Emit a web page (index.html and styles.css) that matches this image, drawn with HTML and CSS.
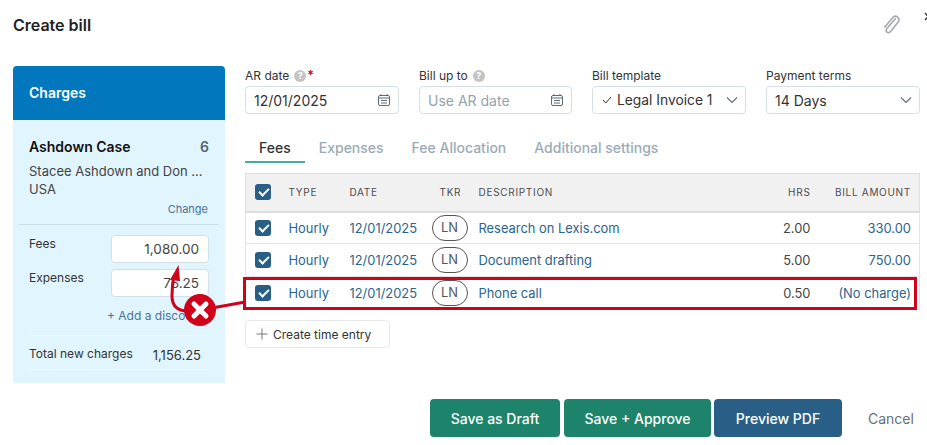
FILE: index.html
```html
<!DOCTYPE html>
<html lang="en">
<head>
    <meta charset="UTF-8">
    <title>Create bill</title>
    <link rel="stylesheet" href="styles.css">
</head>
<body>
    <div class="modal">
        <div class="modal-header">
            <h1>Create bill</h1>
            <svg class="clip-icon" width="18" height="20" viewBox="0 0 18 20" fill="none" stroke="#a3a9ae" stroke-width="1.600" stroke-linecap="round">
                <path d="M13.500 4.500 5 14.500c-1.300 1.600-1.100 2.900 0 3.700 1.100.8 2.600.5 3.800-.9l7-8.800c1.600-2.100 1.300-4.300-.2-5.500-1.600-1.200-3.700-.8-5.200 1L2.800 13"/>
            </svg>
            <svg class="close-icon" width="8" height="10" viewBox="0 0 8 10" fill="none" stroke="#333" stroke-width="1.300">
                <path d="M1 1l6 7M7 1 1 8"/>
            </svg>
        </div>

        <div class="modal-body">
            <aside class="charges">
                <div class="charges-title">Charges</div>
                <div class="case-info">
                    <div class="case-row">
                        <strong>Ashdown Case</strong>
                        <span class="case-count">6</span>
                    </div>
                    <div class="case-client">Stacee Ashdown and Don ...</div>
                    <div class="case-client case-country">USA</div>
                    <a class="change-link">Change</a>
                </div>
                <div class="charges-form">
                    <div class="charge-row">
                        <label>Fees</label>
                        <div class="charge-input">1,080.00</div>
                    </div>
                    <div class="charge-row">
                        <label>Expenses</label>
                        <div class="charge-input">76.25</div>
                    </div>
                    <a class="discount-link">+ Add a discount</a>
                </div>
                <div class="charges-total">
                    <span>Total new charges</span>
                    <span class="total-value">1,156.25</span>
                </div>
            </aside>

            <main class="bill-main">
                <div class="field-row">
                    <div class="field">
                        <div class="field-label">AR date <span class="help">?</span><span class="required">*</span></div>
                        <div class="field-box">
                            <span>12/01/2025</span>
                            <svg width="14" height="14" viewBox="0 0 14 14" fill="none" stroke="#5f6b75" stroke-width="1"><rect x="1.500" y="2.500" width="11" height="10" rx="1.500"/><path d="M1.500 5h11M4 1v2M10 1v2M4 7.500h6M4 10h6"/></svg>
                        </div>
                    </div>
                    <div class="field field-short">
                        <div class="field-label">Bill up to <span class="help">?</span></div>
                        <div class="field-box placeholder">
                            <span>Use AR date</span>
                            <svg width="14" height="14" viewBox="0 0 14 14" fill="none" stroke="#5f6b75" stroke-width="1"><rect x="1.500" y="2.500" width="11" height="10" rx="1.500"/><path d="M1.500 5h11M4 1v2M10 1v2M4 7.500h6M4 10h6"/></svg>
                        </div>
                    </div>
                    <div class="field">
                        <div class="field-label">Bill template</div>
                        <div class="field-box">
                            <span class="template-value">
                                <svg width="10" height="8" viewBox="0 0 10 8" fill="none" stroke="#333" stroke-width="1"><path d="M1 4l2.800 3L9 1"/></svg>
                                Legal Invoice 1
                            </span>
                            <svg width="12" height="8" viewBox="0 0 12 8" fill="none" stroke="#5f6b75" stroke-width="1.100"><path d="M1 1.500l5 5 5-5"/></svg>
                        </div>
                    </div>
                    <div class="field">
                        <div class="field-label">Payment terms</div>
                        <div class="field-box">
                            <span>14 Days</span>
                            <svg width="12" height="8" viewBox="0 0 12 8" fill="none" stroke="#5f6b75" stroke-width="1.100"><path d="M1 1.500l5 5 5-5"/></svg>
                        </div>
                    </div>
                </div>

                <div class="tabs">
                    <div class="tab active">Fees</div>
                    <div class="tab">Expenses</div>
                    <div class="tab">Fee Allocation</div>
                    <div class="tab">Additional settings</div>
                </div>

                <table class="fees-table">
                    <colgroup>
                        <col class="col-check">
                        <col class="col-type">
                        <col class="col-date">
                        <col class="col-tkr">
                        <col>
                        <col class="col-hrs">
                        <col class="col-amount">
                    </colgroup>
                    <thead>
                        <tr>
                            <th><span class="checkbox"></span></th>
                            <th>TYPE</th>
                            <th>DATE</th>
                            <th class="tkr-head">TKR</th>
                            <th>DESCRIPTION</th>
                            <th class="num">HRS</th>
                            <th class="num">BILL AMOUNT</th>
                        </tr>
                    </thead>
                    <tbody>
                        <tr>
                            <td><span class="checkbox"></span></td>
                            <td class="link">Hourly</td>
                            <td class="link">12/01/2025</td>
                            <td><span class="tkr">LN</span></td>
                            <td class="link">Research on Lexis.com</td>
                            <td class="num">2.00</td>
                            <td class="num link">330.00</td>
                        </tr>
                        <tr>
                            <td><span class="checkbox"></span></td>
                            <td class="link">Hourly</td>
                            <td class="link">12/01/2025</td>
                            <td><span class="tkr">LN</span></td>
                            <td class="link">Document drafting</td>
                            <td class="num">5.00</td>
                            <td class="num link">750.00</td>
                        </tr>
                        <tr>
                            <td><span class="checkbox"></span></td>
                            <td class="link">Hourly</td>
                            <td class="link">12/01/2025</td>
                            <td><span class="tkr">LN</span></td>
                            <td class="link">Phone call</td>
                            <td class="num">0.50</td>
                            <td class="num link">(No charge)</td>
                        </tr>
                    </tbody>
                </table>

                <button class="create-entry">
                    <svg width="12" height="12" viewBox="0 0 12 12" fill="none" stroke="#777" stroke-width="1"><path d="M6 .5v11M.5 6h11"/></svg>
                    Create time entry
                </button>
            </main>
        </div>

        <div class="modal-footer">
            <button class="btn btn-green btn-draft">Save as Draft</button>
            <button class="btn btn-green btn-approve">Save + Approve</button>
            <button class="btn btn-blue">Preview PDF</button>
            <a class="cancel-link">Cancel</a>
        </div>
    </div>

    <!-- annotation drawn over the screenshot -->
    <svg class="annotation" width="927" height="445" viewBox="0 0 927 445" fill="none">
        <rect x="244.500" y="278.500" width="671" height="30" stroke="#d0021b" stroke-width="3"/>
        <path d="M245 302 212 308" stroke="#d0021b" stroke-width="3"/>
        <path d="M188 311C177 311 172 306 172 296 172 289 172.500 283 174 276" stroke="#d0021b" stroke-width="3"/>
        <path d="M178.500 265 170 280 180 281Z" fill="#d0021b"/>
        <circle cx="200" cy="310" r="16" fill="#d0021b"/>
        <path d="M194 304l12 12M206 304l-12 12" stroke="#fff" stroke-width="5" stroke-linecap="round"/>
    </svg>
</body>
</html>
```

FILE: styles.css
```css
* {
    margin: 0;
    padding: 0;
    box-sizing: border-box;
}

body {
    font-family: Inter, 'Liberation Sans', sans-serif;
    background: #fff;
    color: #333;
    width: 927px;
    height: 445px;
    overflow: hidden;
    position: relative;
}

.modal {
    padding: 0 7px 0 13px;
}

.modal-header {
    display: flex;
    align-items: center;
    height: 66px;
    padding-bottom: 17px;
}

.modal-header h1 {
    font-size: 16px;
    font-weight: 600;
    color: #222;
    flex: 1;
}

.clip-icon {
    margin-right: 24px;
    margin-top: -2px;
}

.close-icon {
    margin-right: -12px;
    margin-top: -16px;
}

.modal-body {
    display: flex;
    gap: 20px;
}

/* left column */
.charges {
    width: 212px;
    height: 317px;
    background: #e1f5fe;
    border-radius: 4px 4px 0 0;
}

.charges-title {
    background: #0277bd;
    color: #fff;
    font-size: 14px;
    font-weight: 600;
    height: 54px;
    line-height: 54px;
    padding-left: 16px;
    border-radius: 4px 4px 0 0;
}

.case-info {
    margin: 0 6px;
    padding: 18px 10px 0;
    height: 105px;
    border-bottom: 1px solid #c9dfea;
}

.case-row {
    display: flex;
    justify-content: space-between;
    font-size: 14px;
    line-height: 17px;
    color: #111;
}

.case-row strong {
    font-weight: 600;
}

.case-count {
    color: #55636f;
    font-weight: 600;
}

.case-client {
    font-size: 13px;
    line-height: 18px;
    margin-top: 7px;
    color: #444;
}

.case-country {
    margin-top: 0;
}

.change-link {
    display: block;
    text-align: right;
    font-size: 11px;
    line-height: 14px;
    margin-top: 4px;
    margin-right: 1px;
    color: #4a7396;
}

.charges-form {
    margin: 0 16px;
    padding-top: 10px;
    height: 111px;
    border-bottom: 1px solid #eef8fd;
}

.charge-row {
    display: flex;
    justify-content: space-between;
    margin-bottom: 6px;
}

.charge-row label {
    font-size: 12px;
    line-height: 16px;
    padding-top: 1px;
    color: #333;
}

.charge-input {
    width: 98px;
    height: 28px;
    background: #fff;
    border: 1px solid #d4dfe6;
    border-radius: 4px;
    font-size: 13.500px;
    line-height: 26px;
    text-align: right;
    padding-right: 9px;
    color: #444;
}

.discount-link {
    display: block;
    font-size: 12px;
    line-height: 16px;
    margin-top: 11px;
    margin-left: 78px;
    white-space: nowrap;
    color: #4a7396;
}

.charges-total {
    display: flex;
    justify-content: space-between;
    align-items: center;
    margin: 0 16px;
    padding: 2px 8px 0 0;
    height: 34px;
    font-size: 12px;
    color: #333;
    border-bottom: 1px solid #eef8fd;
}

.total-value {
    font-size: 13px;
    margin-top: 2px;
}

/* right column */
.bill-main {
    width: 675px;
}

.field-row {
    display: flex;
    gap: 20px;
}

.field {
    width: 154px;
}

.field-short {
    width: 153px;
}

.field-label {
    display: flex;
    align-items: center;
    gap: 4px;
    font-size: 12px;
    line-height: 16px;
    height: 20px;
    color: #333;
}

.help {
    width: 12px;
    height: 12px;
    border-radius: 50%;
    background: #c4c4c4;
    color: #fff;
    font-size: 9px;
    font-weight: 700;
    line-height: 12px;
    text-align: center;
    margin-left: 1px;
}

.required {
    color: #d0021b;
    font-weight: 700;
    margin-left: -3px;
    margin-top: -3px;
}

.field-box {
    display: flex;
    justify-content: space-between;
    align-items: center;
    height: 28px;
    border: 1px solid #d4dfe6;
    border-radius: 4px;
    padding: 0 7px 0 8px;
    font-size: 14px;
    color: #333;
}

.field-box.placeholder {
    color: #94a3ae;
}

.template-value {
    display: flex;
    align-items: center;
    gap: 5px;
    padding-left: 1px;
    font-size: 13.800px;
}

.tabs {
    display: flex;
    margin-top: 20px;
    height: 29px;
}

.tab {
    padding: 0 14px;
    font-size: 14px;
    font-weight: 500;
    line-height: 28px;
    color: #9aabb8;
}

.tab.active {
    color: #333;
    border-bottom: 2px solid #47a9a9;
}

.fees-table {
    width: 675px;
    margin-top: 10px;
    border-collapse: collapse;
    table-layout: fixed;
    font-size: 12.900px;
}

.col-check { width: 43px; }
.col-type { width: 61px; }
.col-date { width: 82px; }
.col-tkr { width: 47px; }
.col-hrs { width: 60px; }
.col-amount { width: 109px; }

.fees-table thead tr {
    height: 38px;
    background: #f1f1f1;
    border: 1px solid #dedede;
    border-bottom: 2px solid #dedede;
}

.fees-table th {
    font-size: 10px;
    font-weight: 400;
    letter-spacing: 0.700px;
    text-align: left;
    color: #4d4d4d;
    padding: 0;
}

.fees-table th:first-child,
.fees-table td:first-child {
    padding-left: 9px;
    line-height: 0;
}

.fees-table .tkr-head {
    padding-left: 8px;
}

.fees-table tbody tr {
    height: 33px;
    border-bottom: 1px solid #e4e4e4;
    border-left: 1px solid #e4e4e4;
    border-right: 1px solid #e4e4e4;
}

.fees-table tbody tr:first-child {
    height: 32px;
}

.fees-table tbody tr:first-child td {
    padding-top: 1px;
}

.fees-table td {
    padding: 0;
    white-space: nowrap;
    color: #444;
}

.fees-table td.link {
    color: #2a6491;
}

.fees-table .num {
    text-align: right;
}

.fees-table th:last-child,
.fees-table td:last-child {
    padding-right: 8px;
}

.checkbox {
    display: inline-block;
    width: 16px;
    height: 16px;
    border-radius: 3px;
    background: #295f86;
    position: relative;
}

.checkbox::after {
    content: "";
    position: absolute;
    left: 4px;
    top: 4px;
    width: 8px;
    height: 4px;
    border-left: 2px solid #fff;
    border-bottom: 2px solid #fff;
    transform: rotate(-45deg);
}

.tkr {
    display: block;
    width: 36px;
    height: 26px;
    border: 1px solid #555;
    border-radius: 13px;
    line-height: 24px;
    text-align: center;
    color: #555;
}

.create-entry {
    display: flex;
    align-items: center;
    gap: 5px;
    width: 145px;
    height: 28px;
    margin-top: 10px;
    padding-left: 10px;
    background: #fff;
    border: 1px solid #e8e8e8;
    border-radius: 4px;
    font-family: inherit;
    font-size: 12px;
    color: #333;
}

/* footer */
.modal-footer {
    display: flex;
    align-items: center;
    margin-top: 16px;
    padding-left: 417px;
}

.btn {
    height: 38px;
    border: none;
    border-radius: 4px;
    font-family: inherit;
    font-size: 14px;
    font-weight: 500;
    color: #fff;
}

.btn-green {
    background: #1d846b;
}

.btn-blue {
    background: #295f86;
    width: 128px;
    margin-left: 3px;
}

.btn-draft {
    width: 130px;
    margin-right: 4px;
}

.btn-approve {
    width: 147px;
}

.cancel-link {
    margin-left: 26px;
    font-size: 14px;
    color: #66707a;
}

.annotation {
    position: absolute;
    left: 0;
    top: 0;
}
```
